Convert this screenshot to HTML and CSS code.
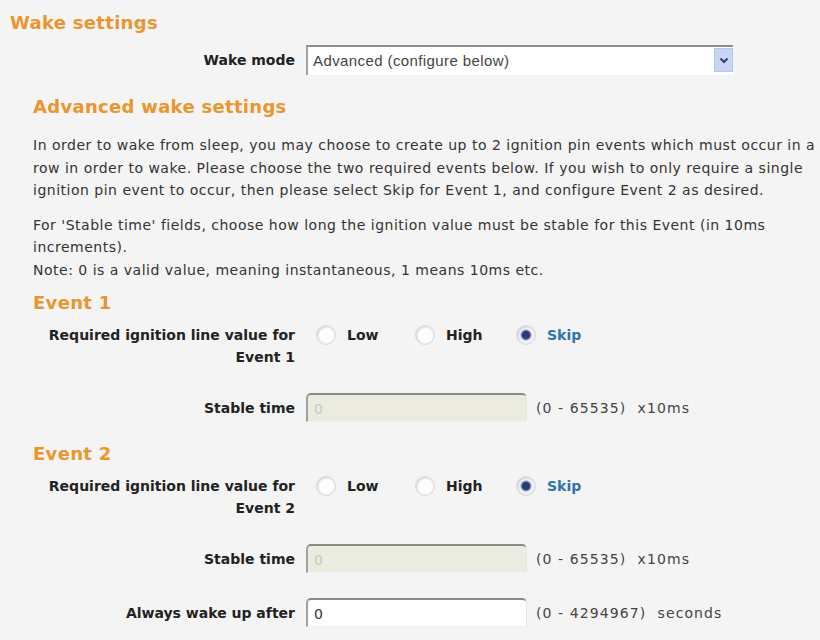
FILE: index.html
```html
<!DOCTYPE html>
<html lang="en">
<head>
  <meta charset="UTF-8" />
  <title>Wake settings</title>
  <link rel="stylesheet" href="styles.css">
</head>
<body>
  <div class="page">
    <h2 class="title">Wake settings</h2>

    <div class="row mode-row">
      <label class="label" for="wakeMode">Wake mode</label>
      <div class="select" id="wakeMode">
        <span class="select-value">Advanced (configure below)</span>
        <span class="select-btn">
          <svg width="10" height="7" viewBox="0 0 10 7"><path d="M1.5 1.5 L5 5 L8.5 1.5" fill="none" stroke="#2b3f73" stroke-width="2"/></svg>
        </span>
      </div>
    </div>

    <div class="section">
      <h3 class="subtitle">Advanced wake settings</h3>
      <p class="info first">In order to wake from sleep, you may choose to create up to 2 ignition pin events which must occur in a row in order to wake. Please choose the two required events below. If you wish to only require a single ignition pin event to occur, then please select Skip for Event 1, and configure Event 2 as desired.</p>
      <p class="info">For 'Stable time' fields, choose how long the ignition value must be stable for this Event (in 10ms increments).<br>Note: 0 is a valid value, meaning instantaneous, 1 means 10ms etc.</p>

      <h3 class="subtitle event first">Event 1</h3>
    </div>
    <div class="row radio-row">
      <div class="label">Required ignition line value for<br>Event 1</div>
      <div class="radios">
        <label class="radio"><input type="radio" name="ev1"> Low</label>
        <label class="radio"><input type="radio" name="ev1"> High</label>
        <label class="radio on"><input type="radio" name="ev1" checked> Skip</label>
      </div>
    </div>
    <div class="row">
      <label class="label">Stable time</label>
      <input class="text" type="text" value="0" disabled>
      <span class="hint">(0 - 65535) &nbsp;x10ms</span>
    </div>

    <div class="section">
      <h3 class="subtitle event">Event 2</h3>
    </div>
    <div class="row radio-row">
      <div class="label">Required ignition line value for<br>Event 2</div>
      <div class="radios">
        <label class="radio"><input type="radio" name="ev2"> Low</label>
        <label class="radio"><input type="radio" name="ev2"> High</label>
        <label class="radio on"><input type="radio" name="ev2" checked> Skip</label>
      </div>
    </div>
    <div class="row">
      <label class="label">Stable time</label>
      <input class="text" type="text" value="0" disabled>
      <span class="hint">(0 - 65535) &nbsp;x10ms</span>
    </div>
    <div class="row">
      <label class="label">Always wake up after</label>
      <input class="text" type="text" value="0">
      <span class="hint">(0 - 4294967) &nbsp;seconds</span>
    </div>
  </div>
</body>
</html>
```

FILE: styles.css
```css
* {
  margin: 0;
  padding: 0;
  box-sizing: border-box;
}

body {
  font-family: 'DejaVu Sans', Verdana, sans-serif;
  font-size: 14px;
  background-color: #f4f4f4;
  color: #333;
}

.page {
  padding: 12px 0 0 10px;
}

.title, .subtitle {
  color: #ea962f;
  font-size: 18px;
  font-weight: bold;
  line-height: 22px;
  letter-spacing: 0.3px;
}

.section {
  padding-left: 23px;
}

.subtitle {
  margin-top: 21px;
}

.subtitle.event.first {
  margin-top: 11px;
}

.info {
  line-height: 22.5px;
  letter-spacing: 0.5px;
  margin-top: 12px;
  padding-right: 2px;
}

.info.first {
  margin-top: 16px;
}

/* label column | control | hint */
.row {
  display: grid;
  grid-template-columns: 285px 221px auto;
  column-gap: 11px;
  align-items: center;
  margin-top: 25px;
}

.mode-row {
  grid-template-columns: 285px 427px;
  margin-top: 11px;
}

.label {
  text-align: right;
  font-weight: bold;
  color: #222;
  line-height: 22px;
}

.select {
  display: flex;
  align-items: center;
  justify-content: space-between;
  height: 30px;
  background: #fff;
  border-top: 2px solid #8c8c8c;
  border-left: 2px solid #a0a0a0;
  padding: 0 0 2px 5px;
  font-family: 'Liberation Sans', Arial, sans-serif;
  font-size: 15px;
  letter-spacing: 0.4px;
  color: #444;
}

.select-btn {
  display: flex;
  align-items: center;
  justify-content: center;
  width: 19px;
  height: 24px;
  background: #c9d5f2;
  border: 1px solid #b9c7ec;
}

.radio-row {
  align-items: start;
  margin-top: 10px;
}

.radios {
  display: flex;
  grid-column: 2 / span 2;
  height: 22px;
  align-items: center;
}

.radio {
  display: flex;
  align-items: center;
  gap: 11px;
  font-weight: bold;
  color: #222;
  width: 101px;
}

.radio:first-child {
  margin-left: 10px;
  width: 99px;
}

.radio.on {
  color: #2f74ad;
}

.radio input {
  appearance: none;
  width: 20px;
  height: 20px;
  border-radius: 50%;
  border: 1px solid #dadada;
  background: radial-gradient(circle, #fdfdfd 50%, #e6e6e6 100%);
  box-shadow: inset 1px 1px 2px rgba(0, 0, 0, 0.14);
}

.radio input:checked {
  background: radial-gradient(circle, #293b78 0 3.5px, #7080b4 4.5px, #f3f3f8 6px, #e2e2ea 100%);
}

.text {
  height: 29px;
  font-family: inherit;
  font-size: 14px;
  color: #333;
  padding: 2px 6px 0 6px;
  background: #fff;
  border-top: 2px solid #8a8a8a;
  border-left: 2px solid #a0a0a0;
  border-right: 1px solid #e6e6e6;
  border-bottom: 1px solid #f0f0f0;
  border-radius: 5px 5px 0 0;
}

.text:disabled {
  background: #ecebe0;
  color: #c8c8c0;
}

.hint {
  color: #444;
  letter-spacing: 1.1px;
  margin-left: -2px;
}
```
